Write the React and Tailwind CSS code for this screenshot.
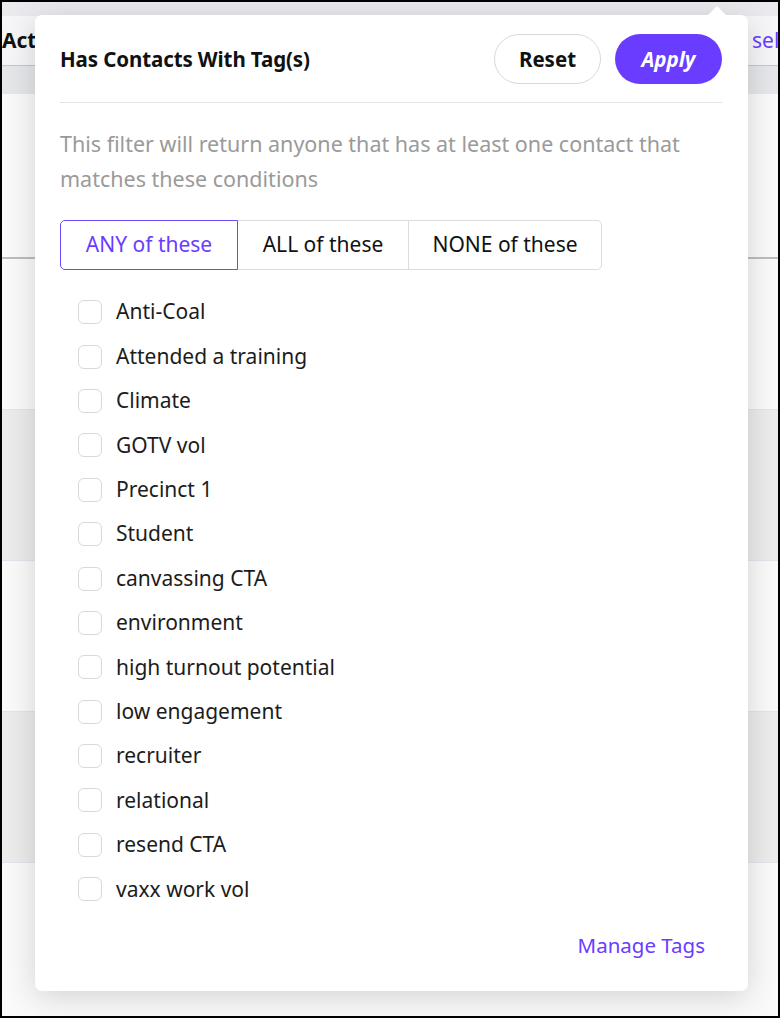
import React, { useState } from "react";

const tags = [
  "Anti-Coal",
  "Attended a training",
  "Climate",
  "GOTV vol",
  "Precinct 1",
  "Student",
  "canvassing CTA",
  "environment",
  "high turnout potential",
  "low engagement",
  "recruiter",
  "relational",
  "resend CTA",
  "vaxx work vol",
];

const modes = ["ANY of these", "ALL of these", "NONE of these"];

const App = () => {
  const [mode, setMode] = useState(0);
  const [checked, setChecked] = useState({});

  return (
    <div
      className="relative w-[780px] h-[1018px] box-border border-2 border-black overflow-hidden bg-white"
      style={{ fontFamily: '"Noto Sans", "Open Sans", sans-serif' }}
    >
      {/* page behind the popover */}
      <div className="flex flex-col h-full">
        <div className="h-[14px] bg-[#e9e9ee]" />
        <div className="h-[50px] flex items-center bg-[#f6f6f8] border-b border-[#c8c8cc]">
          <span className="text-[21px] font-bold text-[#111] whitespace-nowrap">Actions</span>
          <div className="flex-1" />
          <span className="w-[26px] overflow-hidden whitespace-nowrap text-[21px] text-[#6a3cff]">sel</span>
        </div>
        <div className="h-[28px] bg-[#e6e7ea]" />
        <div className="h-[165px] bg-[#fafafa] border-b-2 border-[#bdbdbd]" />
        <div className="h-[151px] bg-[#fafafa] border-b border-[#e4e4e8]" />
        <div className="h-[151px] bg-[#ececec] border-b border-[#e4e4ec]" />
        <div className="h-[151px] bg-[#fafafa] border-b border-[#e4e4e8]" />
        <div className="h-[151px] bg-[#ececec] border-b border-[#e4e4ec]" />
        <div className="flex-1 bg-[#fafafa]" />
      </div>

      {/* popover */}
      <div className="absolute left-[33px] top-[13px] w-[713px] h-[976px] bg-white rounded-[7px] shadow-[0_6px_32px_rgba(0,0,0,0.16)] pl-[25px] pr-[26px] pt-[19px]">
        <div className="absolute -top-[9px] left-[672px] w-0 h-0 border-l-[10px] border-r-[10px] border-b-[10px] border-l-transparent border-r-transparent border-b-white" />

        <div className="flex items-center justify-between h-[50px]">
          <h2 className="text-[20.5px] font-bold text-[#111] tracking-[-0.1px]">
            Has Contacts With Tag(s)
          </h2>
          <div className="flex gap-[14px]">
            <button className="w-[107px] h-[50px] rounded-full border border-[#d9d9d9] bg-white text-[20.5px] font-bold text-[#111]">
              Reset
            </button>
            <button className="w-[107px] h-[50px] rounded-full bg-[#6a3cff] text-[20.5px] font-bold italic text-white">
              Apply
            </button>
          </div>
        </div>

        <div className="mt-[18px] h-px bg-[#e3e3e3]" />

        <p className="mt-[23px] text-[21.5px] leading-[35px] text-[#9a9a9a]">
          This filter will return anyone that has at least one contact that
          matches these conditions
        </p>

        <div className="mt-[24px] flex h-[50px] w-[544px]">
          {modes.map((m, i) => (
            <button
              key={m}
              onClick={() => setMode(i)}
              className={
                (i === 0 ? "w-[178px] rounded-l-[5px] " : i === 1 ? "w-[172px] " : "w-[194px] rounded-r-[5px] ") +
                (mode === i
                  ? "border border-[#6a4bff] text-[#6a3cff] z-10 "
                  : "border border-[#dcdcdc] text-[#111] ") +
                (i > 0 ? "-ml-px " : "") +
                "relative text-[21px] bg-white"
              }
            >
              {m}
            </button>
          ))}
        </div>

        <ul className="mt-[20px]">
          {tags.map((t) => (
            <li key={t} className="h-[44.4px] flex items-center pl-[18px]">
              <button
                onClick={() => setChecked({ ...checked, [t]: !checked[t] })}
                className={
                  "w-[24px] h-[24px] rounded-[6px] border " +
                  (checked[t] ? "bg-[#6a3cff] border-[#6a3cff]" : "bg-white border-[#d9d9d9]")
                }
              />
              <span className="ml-[14px] text-[21px] text-[#1c1c1c]">{t}</span>
            </li>
          ))}
        </ul>

        <div className="mt-[19px] flex justify-end pr-[17px]">
          <a className="text-[20.5px] leading-[30px] text-[#6a3cff] cursor-pointer">Manage Tags</a>
        </div>
      </div>
    </div>
  );
};

export default App;
